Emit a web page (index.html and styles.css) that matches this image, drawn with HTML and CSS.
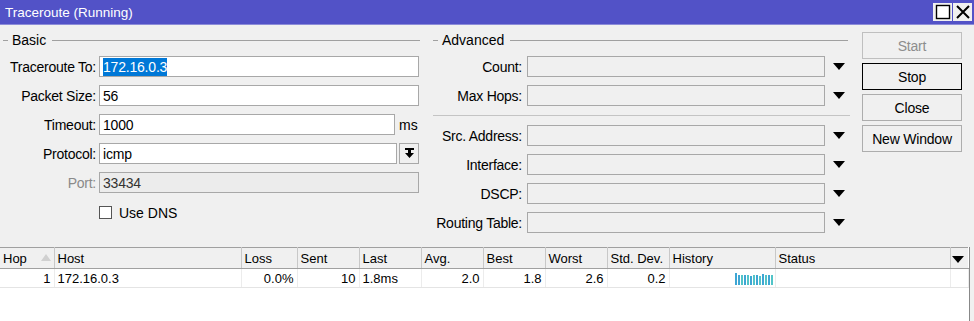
FILE: index.html
```html
<!DOCTYPE html>
<html>
<head>
    <title>Traceroute (Running)</title>
    <link rel="stylesheet" href="styles.css">
</head>
<body>
<div class="window">
    <div class="titlebar">
        <span class="title">Traceroute (Running)</span>
        <div class="winbtns">
            <span class="winbtn"><svg width="16" height="16" viewBox="0 0 16 16"><rect x="1.5" y="1.5" width="13" height="13" fill="#fff" stroke="#000" stroke-width="1.4"/></svg></span>
            <span class="winbtn"><svg width="16" height="16" viewBox="0 0 16 16"><path d="M2 2 L14 14 M14 2 L2 14" stroke="#000" stroke-width="2"/></svg></span>
        </div>
    </div>

    <div class="main">
        <!-- Basic -->
        <div class="group basic">
            <div class="legend"><span>Basic</span></div>
            <div class="row">
                <label>Traceroute To:</label>
                <div class="field w320"><span class="selected">172.16.0.3</span></div>
            </div>
            <div class="row">
                <label>Packet Size:</label>
                <div class="field w320">56</div>
            </div>
            <div class="row">
                <label>Timeout:</label>
                <div class="field w296">1000</div>
                <span class="unit">ms</span>
            </div>
            <div class="row">
                <label>Protocol:</label>
                <div class="field w298">icmp</div>
                <span class="ddbtn">
                    <svg width="11" height="11" viewBox="0 0 11 11"><rect x="1" y="0" width="9" height="2" fill="#000"/><path d="M4 2 H7 V5 H10 L5.5 10 L1 5 H4 Z" fill="#000"/></svg>
                </span>
            </div>
            <div class="row">
                <label class="disabled">Port:</label>
                <div class="field w320 readonly">33434</div>
            </div>
            <div class="row check">
                <span class="checkbox"></span>
                <span>Use DNS</span>
            </div>
        </div>

        <!-- Advanced -->
        <div class="group advanced">
            <div class="legend"><span>Advanced</span></div>
            <div class="row">
                <label>Count:</label>
                <div class="field combo"></div>
                <span class="arrow"></span>
            </div>
            <div class="row">
                <label>Max Hops:</label>
                <div class="field combo"></div>
                <span class="arrow"></span>
            </div>
            <div class="separator"></div>
            <div class="row">
                <label>Src. Address:</label>
                <div class="field combo"></div>
                <span class="arrow"></span>
            </div>
            <div class="row">
                <label>Interface:</label>
                <div class="field combo"></div>
                <span class="arrow"></span>
            </div>
            <div class="row">
                <label>DSCP:</label>
                <div class="field combo"></div>
                <span class="arrow"></span>
            </div>
            <div class="row">
                <label>Routing Table:</label>
                <div class="field combo"></div>
                <span class="arrow"></span>
            </div>
        </div>

        <!-- Botoes -->
        <div class="buttons">
            <button class="btn disabled">Start</button>
            <button class="btn default">Stop</button>
            <button class="btn">Close</button>
            <button class="btn">New Window</button>
        </div>
    </div>

    <div class="list">
        <table>
            <colgroup>
                <col style="width:54px"><col style="width:187px"><col style="width:56px">
                <col style="width:62px"><col style="width:62px"><col style="width:62px">
                <col style="width:62px"><col style="width:62px"><col style="width:62px">
                <col style="width:106px"><col style="width:175px"><col style="width:18px">
            </colgroup>
            <thead>
                <tr>
                    <th class="sort">Hop<span class="sortarrow"></span></th>
                    <th>Host</th>
                    <th>Loss</th>
                    <th>Sent</th>
                    <th>Last</th>
                    <th>Avg.</th>
                    <th>Best</th>
                    <th>Worst</th>
                    <th>Std. Dev.</th>
                    <th>History</th>
                    <th>Status</th>
                    <th class="menu"><span class="arrow"></span></th>
                </tr>
            </thead>
            <tbody>
                <tr>
                    <td class="num">1</td>
                    <td>172.16.0.3</td>
                    <td class="num">0.0%</td>
                    <td class="num">10</td>
                    <td>1.8ms</td>
                    <td class="num">2.0</td>
                    <td class="num">1.8</td>
                    <td class="num">2.6</td>
                    <td class="num">0.2</td>
                    <td class="history">
                        <div class="bars">
                            <i class="b1" style="height:12px"></i>
                            <i class="b1" style="height:10px"></i>
                            <i class="b2" style="height:10px"></i>
                            <i class="b1" style="height:10px"></i>
                            <i class="b2" style="height:10px"></i>
                            <i class="b1" style="height:9px"></i>
                            <i class="b2" style="height:10px"></i>
                            <i class="b1" style="height:10px"></i>
                            <i class="b2" style="height:9px"></i>
                            <i class="b1" style="height:11px"></i>
                            <i class="b2" style="height:10px"></i>
                            <i class="b1" style="height:10px"></i>
                            <i class="b2" style="height:10px"></i>
                        </div>
                    </td>
                    <td></td>
                    <td></td>
                </tr>
            </tbody>
        </table>
    </div>
</div>
</body>
</html>
```

FILE: styles.css
```css
/* Reset */
html, body {
    margin: 0;
    padding: 0;
}

body {
    width: 974px;
    height: 321px;
    overflow: hidden;
    background-color: #f0f0f0;
    font-family: "Liberation Sans", Arial, sans-serif;
    font-size: 14px;
    color: #000;
}

.window {
    height: 321px;
    display: flex;
    flex-direction: column;
}

/* Barra de titulo */
.titlebar {
    height: 25px;
    background-color: #5252c7;
    color: #fff;
    font-size: 13.5px;
    display: flex;
    align-items: center;
    justify-content: space-between;
    padding-left: 5px;
    padding-right: 2px;
    border-bottom: 1px solid #8c8cd8;
    box-sizing: border-box;
}

.winbtns {
    display: flex;
    gap: 1px;
}

.winbtn {
    width: 19px;
    height: 18px;
    background-color: #f0f0f0;
    display: flex;
    align-items: center;
    justify-content: center;
}

/* Area principal */
.main {
    height: 222px;
    display: flex;
    box-sizing: border-box;
    padding-top: 7px;
}

.group {
    display: flex;
    flex-direction: column;
}

.basic {
    width: 423px;
}

.advanced {
    width: 418px;
    margin-left: 10px;
}

.legend {
    height: 16px;
    display: flex;
    align-items: center;
    margin-bottom: 8px;
}

.legend::before {
    content: "";
    width: 5px;
    border-top: 1px solid #a0a0a0;
    margin-left: 3px;
    margin-right: 4px;
}

.legend::after {
    content: "";
    flex: 1;
    border-top: 1px solid #a0a0a0;
    margin-left: 6px;
    margin-right: 3px;
}

.advanced .legend::before {
    margin-left: 0;
}

.row {
    display: flex;
    align-items: center;
    height: 21px;
    margin-bottom: 8px;
}

.row label {
    width: 96px;
    text-align: right;
    margin-right: 3px;
    white-space: nowrap;
    letter-spacing: -0.25px;
}

.advanced .row label {
    width: 89px;
    margin-right: 5px;
}

.row label.disabled {
    color: #8a8a8a;
}

.field {
    height: 21px;
    box-sizing: border-box;
    border: 1px solid #a8a8a8;
    background-color: #fff;
    padding-left: 3px;
    display: flex;
    align-items: center;
    letter-spacing: -0.2px;
}

.w320 { width: 320px; }
.w298 { width: 298px; }
.w296 { width: 296px; }

.field.readonly {
    background-color: #ececec;
    color: #333;
}

.field.combo {
    width: 298px;
    background-color: #f0f0f0;
}

.selected {
    background-color: #0078d7;
    color: #fff;
    padding: 1px 0;
}

.unit {
    margin-left: 4px;
}

.ddbtn {
    width: 20px;
    height: 21px;
    margin-left: 2px;
    box-sizing: border-box;
    border: 1px solid #a8a8a8;
    display: flex;
    align-items: center;
    justify-content: center;
}

.arrow {
    width: 0;
    height: 0;
    border-left: 6px solid transparent;
    border-right: 6px solid transparent;
    border-top: 7px solid #000;
    margin-left: 8px;
}

.separator {
    border-top: 1px solid #c4c4c4;
    margin: 1px 1px 9px 0;
}

.row.check {
    margin-left: 99px;
    margin-top: 1px;
}

.checkbox {
    width: 13px;
    height: 13px;
    box-sizing: border-box;
    border: 1px solid #555;
    background-color: #fff;
    margin-right: 7px;
}

/* Botoes */
.buttons {
    margin-left: 11px;
    display: flex;
    flex-direction: column;
    gap: 4px;
}

.btn {
    width: 100px;
    height: 27px;
    box-sizing: border-box;
    background-color: #f0f0f0;
    border: 1px solid #adadad;
    font-family: "Liberation Sans", Arial, sans-serif;
    font-size: 14px;
    letter-spacing: -0.2px;
    color: #000;
    padding: 0;
}

.btn.disabled {
    color: #8d8d8d;
    border-color: #bfbfbf;
}

.btn.default {
    border: 1px solid #000;
}

/* Lista */
.list {
    flex: 1;
    background-color: #fff;
    width: 969px;
    border-right: 1px solid #888;
    box-sizing: content-box;
    font-size: 13px;
}

table {
    border-collapse: collapse;
    table-layout: fixed;
    width: 968px;
}

th {
    height: 21px;
    box-sizing: border-box;
    font-weight: normal;
    text-align: left;
    padding: 0 0 0 3px;
    background-color: #f0f0f0;
    border-top: 1px solid #a0a0a0;
    border-bottom: 1px solid #a0a0a0;
    border-right: 1px solid #c8c8c8;
    white-space: nowrap;
    overflow: hidden;
}

th.sort {
    position: relative;
}

.sortarrow {
    position: absolute;
    right: 3px;
    top: 6px;
    width: 0;
    height: 0;
    border-left: 5px solid transparent;
    border-right: 5px solid transparent;
    border-bottom: 7px solid #d0d0d0;
}

th.menu {
    padding: 0;
    border-right: none;
}

th.menu .arrow {
    margin-left: 1px;
    display: inline-block;
    vertical-align: middle;
}

td {
    height: 18px;
    padding: 0 3px;
    border-right: 1px solid #ececec;
    border-bottom: 1px solid #e4e4e4;
    white-space: nowrap;
}

td.num {
    text-align: right;
}

td.history {
    padding: 0 2px 0 0;
}

.bars {
    display: flex;
    justify-content: flex-end;
    align-items: flex-end;
    height: 13px;
    gap: 1px;
}

.bars i {
    width: 2px;
    flex: none;
}

.bars .b1 {
    background-color: #3ea6d4;
}

.bars .b2 {
    background-color: #52c4c8;
}
```
